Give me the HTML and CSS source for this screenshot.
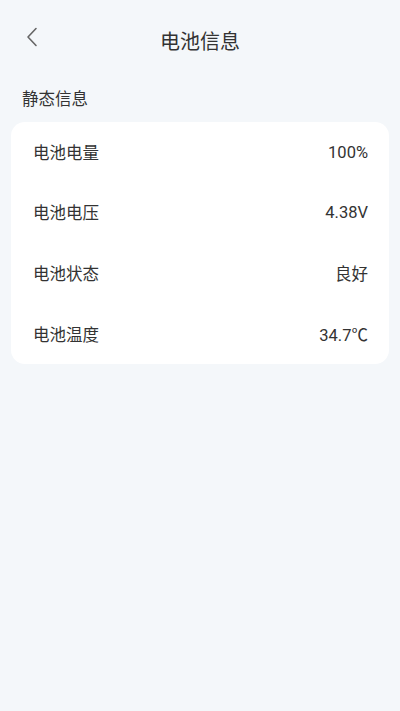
FILE: index.html
```html
<!DOCTYPE html>
<html lang="zh">
<head>
<meta charset="utf-8">
<link rel="stylesheet" href="styles.css">
</head>
<body>
<div class="page">
  <header class="nav">
    <span class="back">
      <svg width="14" height="20" viewBox="0 0 14 20"><path d="M11 1.5 L3 10 L11 18.5" fill="none" stroke="#666" stroke-width="1.6" stroke-linecap="round" stroke-linejoin="round"/></svg>
    </span>
    <h1 class="title">电池信息</h1>
  </header>
  <div class="section-label">静态信息</div>
  <div class="card">
    <div class="row"><span>电池电量</span><span>100%</span></div>
    <div class="row"><span>电池电压</span><span>4.38V</span></div>
    <div class="row"><span>电池状态</span><span>良好</span></div>
    <div class="row"><span>电池温度</span><span>34.7℃</span></div>
  </div>
</div>
</body>
</html>
```
FILE: styles.css
```css
html, body {
  margin: 0;
  padding: 0;
  background: #f4f7fa;
  font-family: Roboto, "Noto Sans CJK SC", sans-serif;
  color: #333;
}
.page {
  width: 400px;
  min-height: 711px;
}
.nav {
  position: relative;
  height: 84px;
  display: flex;
  align-items: center;
  justify-content: center;
}
.back {
  position: absolute;
  left: 25px;
  top: 27px;
  display: flex;
}
.title {
  margin: 0;
  font-size: 20px;
  font-weight: 400;
  color: #333;
  line-height: 1;
}
.section-label {
  padding-left: 22px;
  padding-top: 8px;
  font-size: 16.5px;
  line-height: 1;
  height: 30px;
  color: #333;
}
.card {
  margin: 0 11px;
  background: #fff;
  border-radius: 14px;
  padding: 0;
}
.row {
  height: 60.75px;
  display: flex;
  align-items: center;
  justify-content: space-between;
  padding: 0 21px 0 22px;
  font-size: 16.5px;
  color: #333;
}
.row:first-child { height: 60px; }
```
